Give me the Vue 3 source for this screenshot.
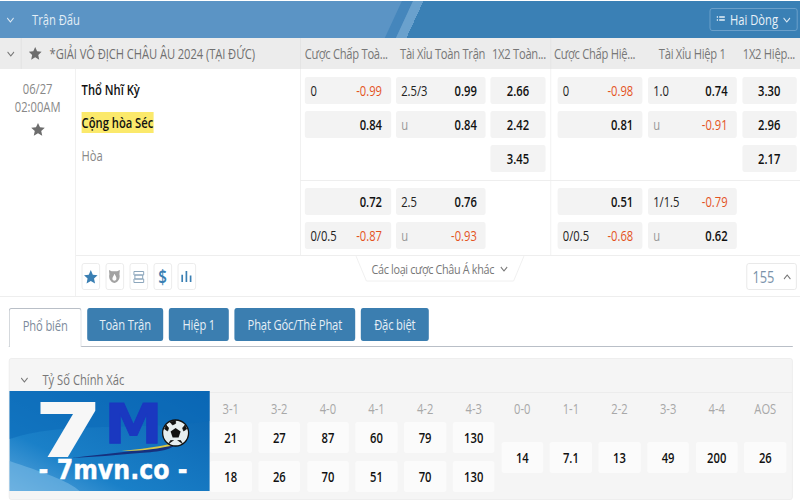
<template>
  <div class="page">
    <div class="topbar">
      <div class="topbar-left">
        <svg class="chev-white" viewBox="0 0 10 6" width="12" height="6"><path d="M1 1l4 4 4-4" /></svg>
        <span class="topbar-title">Trận Đấu</span>
      </div>
      <div class="view-btn">
        <svg viewBox="0 0 10 8" width="12" height="8" class="list-icon">
          <path d="M0 1h1.500M3 1h7M0 4h1.500M3 4h7" />
        </svg>
        <span>Hai Dòng</span>
        <svg class="chev-white" viewBox="0 0 10 6" width="11" height="6"><path d="M1 1l4 4 4-4" /></svg>
      </div>
    </div>

    <div class="league-row">
      <div class="league-toggle">
        <svg class="chev-gray" viewBox="0 0 10 6" width="11" height="6"><path d="M1 1l4 4 4-4" /></svg>
      </div>
      <div class="league-name">
        <svg viewBox="0 0 24 24" width="18" height="15" preserveAspectRatio="none" class="star-gray"><path :d="starPath" /></svg>
        <span>*GIẢI VÔ ĐỊCH CHÂU ÂU 2024 (TẠI ĐỨC)</span>
      </div>
      <div class="col-group first">
        <span class="h1">Cược Chấp Toà...</span>
        <span class="h2">Tài Xỉu Toàn Trận</span>
        <span class="h3">1X2 Toàn...</span>
      </div>
      <div class="col-group second">
        <span class="h1">Cược Chấp Hiệ...</span>
        <span class="h2">Tài Xỉu Hiệp 1</span>
        <span class="h3">1X2 Hiệp...</span>
      </div>
    </div>

    <div class="match">
      <div class="date-col">
        <div>06/27</div>
        <div>02:00AM</div>
        <svg viewBox="0 0 24 24" width="19" height="15" preserveAspectRatio="none" class="star-gray date-star"><path :d="starPath" /></svg>
      </div>
      <div class="match-body">
        <div class="match-main">
          <div class="teams">
            <div class="team"><b>Thổ Nhĩ Kỳ</b></div>
            <div class="team"><b class="marked">Cộng hòa Séc</b></div>
            <div class="team draw">Hòa</div>
          </div>
          <div class="odds">
            <div v-for="(section, i) in sections" :key="i" class="odds-section">
              <div v-for="(group, g) in section" :key="g" class="odds-group" :class="{ first: g === 0 }">
                <template v-for="(cell, c) in group" :key="c">
                  <div v-if="cell" class="cell" :class="{ solo: cell.length === 1 }">
                    <span v-if="cell.length > 1" class="line" :class="{ under: cell[0] === 'u' }">{{ cell[0] }}</span>
                    <span class="val" :class="{ neg: cell[cell.length - 1].startsWith('-') }">{{ cell[cell.length - 1] }}</span>
                  </div>
                  <div v-else class="cell-empty"></div>
                </template>
              </div>
            </div>
          </div>
        </div>
        <div class="match-foot">
          <div class="tools">
            <div class="tool">
              <svg viewBox="0 0 24 24" width="19" height="16" preserveAspectRatio="none" class="ico-fill"><path :d="starPath" /></svg>
            </div>
            <div class="tool">
              <svg viewBox="0 0 14 16" width="16" height="15" preserveAspectRatio="none">
                <path fill="#a3a3a3" d="M1 1l3 1.500h6L13 1l-.5 4.500c1 3.500-.5 8-5.500 9.500C2 13.500.5 9 1.500 5.500z" />
                <path fill="#fff" d="M7 5c1 2 2.500 3 2.200 5.500C9 12 8 12.600 7 12.600s-2-.6-2.200-2.100C4.600 8.500 6.500 7.500 7 5z" />
              </svg>
            </div>
            <div class="tool">
              <svg viewBox="0 0 14 14" width="17" height="14" preserveAspectRatio="none" class="ico-stroke">
                <path d="M2 1.500h10v3.500H2zM3 5h8v4H3zM2 9h10v3.500H2z" />
              </svg>
            </div>
            <div class="tool dollar">$</div>
            <div class="tool">
              <svg viewBox="0 0 12 14" width="14" height="13" preserveAspectRatio="none" class="ico-bars">
                <path d="M1.500 5v8M6 1v12M10.500 6v7" />
              </svg>
            </div>
          </div>
          <div class="more">
            <svg class="more-shape" viewBox="0 0 212 26" width="212" height="26"><path d="M1 0l13 25h184l13-25" /></svg>
            <span>Các loại cược Châu Á khác</span>
            <svg class="chev-gray" viewBox="0 0 10 6" width="12" height="6"><path d="M1 1l4 4 4-4" /></svg>
          </div>
          <div class="count">
            <span>155</span>
            <svg class="chev-gray" viewBox="0 0 10 6" width="12" height="6"><path d="M1 5l4-4 4 4" /></svg>
          </div>
        </div>
      </div>
    </div>

    <div class="tabs">
      <div
        v-for="(t, i) in tabs"
        :key="t.label"
        class="tab"
        :class="{ active: i === 0 }"
        :style="{ width: t.width + 'px' }"
      >{{ t.label }}</div>
    </div>

    <div class="panel">
      <div class="panel-head">
        <svg class="chev-gray" viewBox="0 0 10 6" width="11" height="6"><path d="M1 1l4 4 4-4" /></svg>
        <span>Tỷ Số Chính Xác</span>
      </div>
      <div class="scores">
        <div v-for="s in scores" :key="s.label" class="score-col">
          <div class="score-label">{{ s.label }}</div>
          <div class="score-vals">
            <div v-for="(v, i) in s.vals" :key="i" class="score-val">{{ v }}</div>
          </div>
        </div>
      </div>

      <svg class="logo" viewBox="0 0 200 100" width="250" height="100" preserveAspectRatio="none">
        <defs>
          <linearGradient id="logoBg" x1="0" y1="1" x2="1" y2="0">
            <stop offset="0" stop-color="#5ba6dc" />
            <stop offset="0.3" stop-color="#1a80c8" />
            <stop offset="1" stop-color="#0a63b0" />
          </linearGradient>
        </defs>
        <rect width="200" height="100" fill="url(#logoBg)" />
        <path d="M0 48C50 30 130 40 200 30V0H0z" fill="#0b6ab8" opacity=".55" />
        <path d="M0 100V70C30 80 60 90 70 100z" fill="#7cbbe6" opacity=".55" />
        <text x="26" y="65" class="logo-seven" textLength="66" lengthAdjust="spacingAndGlyphs">7</text>
        <text x="95" y="52" class="logo-m" textLength="58" lengthAdjust="spacingAndGlyphs">M</text>
        <path d="M62 67C100 62 135 60 165 52C166 58 150 61 130 62C105 64 85 66 62 67z" fill="#16307e" />
        <path d="M112 60C130 58 150 56 163 52L161 55C142 59 128 60 112 60z" fill="#d8c94a" />
        <circle cx="166" cy="42" r="13" fill="#e6eef0" stroke="#111" stroke-width="1.300" />
        <path d="M166 37l5 3.500-2 6h-6l-2-6z" fill="#111" />
        <path d="M166 29.500v3l-3 1.500-2.500-3zM177 38l-3 2-1-3 2.500-3zM155 38l3 2 1-3-2.500-3zM159 53l2-3.500h3M173 53l-2-3.500h-3" fill="#111" stroke="#111" stroke-width=".7" />
        <text x="29" y="88" class="logo-url" textLength="149" lengthAdjust="spacingAndGlyphs">- 7mvn.co -</text>
      </svg>
    </div>
  </div>
</template>

<script setup>
const starPath = 'M12 1.500l3.200 7 7.500.8-5.600 5.100 1.600 7.500L12 18l-6.700 3.900 1.600-7.500L1.300 9.300l7.500-.8z'

const tabs = [
  { label: 'Phổ biến', width: 91 },
  { label: 'Toàn Trận', width: 95 },
  { label: 'Hiệp 1', width: 75 },
  { label: 'Phạt Góc/Thẻ Phạt', width: 151 },
  { label: 'Đặc biệt', width: 85 },
]

// first value is the line, last one the price
const sections = [
  [
    [['0', '-0.99'], ['2.5/3', '0.99'], ['2.66'], ['0.84'], ['u', '0.84'], ['2.42'], null, null, ['3.45']],
    [['0', '-0.98'], ['1.0', '0.74'], ['3.30'], ['0.81'], ['u', '-0.91'], ['2.96'], null, null, ['2.17']],
  ],
  [
    [['0.72'], ['2.5', '0.76'], null, ['0/0.5', '-0.87'], ['u', '-0.93'], null],
    [['0.51'], ['1/1.5', '-0.79'], null, ['0/0.5', '-0.68'], ['u', '0.62'], null],
  ],
]

// the first four columns sit under the logo, so they are left out
const scores = [
  { label: '3-1', vals: [21, 18] },
  { label: '3-2', vals: [27, 26] },
  { label: '4-0', vals: [87, 70] },
  { label: '4-1', vals: [60, 51] },
  { label: '4-2', vals: [79, 70] },
  { label: '4-3', vals: [130, 130] },
  { label: '0-0', vals: [14] },
  { label: '1-1', vals: [7.1] },
  { label: '2-2', vals: [13] },
  { label: '3-3', vals: [49] },
  { label: '4-4', vals: [200] },
  { label: 'AOS', vals: [26] },
]
</script>

<style scoped>
/* the reference is a 1000px wide page squeezed into 800px, so it is built the same way */
.page {
  width: 1000px;
  height: 500px;
  overflow: hidden;
  transform: scaleX(0.8);
  transform-origin: 0 0;
  background: #fff;
  color: #777;
  font-family: "Open Sans", "Liberation Sans", sans-serif;
  font-size: 14px;
  position: relative;
}
svg { display: block; flex: none; }
.chev-white, .chev-gray { fill: none; stroke-width: 1.1; }
.chev-white { stroke: #dbe8f3; }
.chev-gray { stroke: #777; }

.topbar {
  position: relative;
  overflow: hidden;
  margin-top: 1px;
  height: 37px;
  display: flex;
  align-items: center;
  justify-content: space-between;
  padding: 0 3px 0 7px;
  background: #5b94c5;
}
.topbar::before, .topbar::after {
  content: "";
  position: absolute;
  top: 0;
  bottom: 0;
  transform: skewX(-30deg);
  transform-origin: 0 100%;
}
.topbar::before { left: 481px; width: 14px; background: #4586bc; }
.topbar::after {
  left: 495px;
  width: 700px;
  background: linear-gradient(90deg, #6aa1cd 13px, #3a80b5 13px);
}
.topbar-left, .view-btn { position: relative; z-index: 1; }
.topbar-left { display: flex; align-items: center; gap: 21px; }
.topbar-title { color: #e3eef6; }
.view-btn {
  height: 23px;
  width: 110px;
  box-sizing: border-box;
  border: 1px solid #6fa3cc;
  border-radius: 3px;
  display: flex;
  align-items: center;
  justify-content: center;
  gap: 5px;
  color: #e8f1f8;
}
.list-icon { fill: none; stroke: #e8f1f8; stroke-width: 1.4; }

.league-row {
  height: 31px;
  background: #ececec;
  display: flex;
  align-items: center;
}
.league-toggle {
  width: 27px;
  height: 100%;
  border-right: 1px solid #e0e0e0;
  box-sizing: border-box;
  display: flex;
  align-items: center;
  justify-content: center;
}
.league-name {
  width: 348px;
  display: flex;
  align-items: center;
  gap: 9px;
  padding-left: 8px;
  box-sizing: border-box;
  color: #707070;
  white-space: nowrap;
  letter-spacing: -0.1px;
}
.star-gray { fill: #6d6d6d; }
.col-group {
  width: 312.5px;
  height: 100%;
  display: flex;
  align-items: center;
  box-sizing: border-box;
  white-space: nowrap;
  border-left: 1px solid #e3e3e3;
  letter-spacing: -0.35px;
}
.col-group.first { padding-left: 5px; }
.col-group.first .h1 { width: 119px; }
.col-group.first .h2 { width: 115px; }
.col-group.second { padding-left: 4px; }
.col-group.second .h1 { width: 131px; }
.col-group.second .h2 { width: 105px; }

.match {
  display: flex;
  height: 227px;
  border-bottom: 1px solid #eee;
}
.date-col {
  width: 95px;
  flex: none;
  border-right: 1px solid #eee;
  text-align: center;
  padding-top: 11px;
  box-sizing: border-box;
  line-height: 18px;
  color: #888;
}
.date-star { margin: 6px auto 0; }
.match-body { flex: 1; display: flex; flex-direction: column; min-width: 0; }
.match-main { display: flex; height: 186px; }
.teams { width: 280px; flex: none; padding: 4px 0 0 7px; box-sizing: border-box; }
.team { height: 33px; display: flex; align-items: center; color: #888; }
.team b { color: #111; font-weight: 600; }
.team b.marked { background: #fbe96b; padding: 1px 0; }
.odds { flex: 1; min-width: 0; }
.odds-section { display: flex; }
.odds-section + .odds-section { border-top: 1px solid #eee; }
.odds-section:first-child { height: 111px; }
.odds-section:last-child { height: 75px; box-sizing: border-box; }
.odds-section:last-child .odds-group { padding-top: 7px; }
.odds-group {
  width: 312.5px;
  box-sizing: border-box;
  padding: 8px 0 0 8px;
  display: grid;
  grid-template-columns: 106px 111px 68px;
  column-gap: 7px;
  row-gap: 7px;
  grid-auto-rows: 27px;
  border-left: 1px solid #eee;
}
.odds-group.first {
  padding-left: 5px;
  grid-template-columns: 107.5px 112.5px 69px;
  column-gap: 6px;
}
.cell {
  background: #f3f3f3;
  border-radius: 3px;
  display: flex;
  align-items: center;
  justify-content: space-between;
  padding: 0 11px 0 7px;
  color: #222;
  white-space: nowrap;
}
.cell.solo { justify-content: flex-end; }
.odds-group > .cell:nth-child(3n) { justify-content: center; padding: 0; }
.line.under { color: #999; }
.val { color: #111; font-weight: 600; }
.val.neg { color: #e4531f; font-weight: 500; }

.match-foot {
  flex: 1;
  border-top: 1px solid #eee;
  display: flex;
  align-items: flex-start;
  position: relative;
}
.tools { display: flex; gap: 7.500px; padding: 7px 0 0 7px; }
.tool {
  width: 22.500px;
  height: 27px;
  border: 1px solid #eaeaea;
  border-radius: 3px;
  box-sizing: border-box;
  display: flex;
  align-items: center;
  justify-content: center;
}
.ico-fill { fill: #3a7fb3; }
.ico-stroke { fill: none; stroke: #8aa5bb; stroke-width: 1; }
.ico-bars { fill: none; stroke: #3a7fb3; stroke-width: 1.800; }
.dollar { color: #3a7fb3; font-size: 19px; font-weight: 600; }
.more {
  position: absolute;
  left: 349px;
  top: 0;
  width: 212px;
  height: 26px;
  display: flex;
  align-items: center;
  justify-content: center;
  gap: 6px;
  font-size: 13.500px;
  letter-spacing: -0.4px;
  white-space: nowrap;
}
.more-shape { position: absolute; left: 0; top: 0; fill: #fff; stroke: #eee; }
.more span, .more > .chev-gray { position: relative; }
.count {
  margin: 7px 4px 0 auto;
  width: 63.500px;
  height: 27px;
  border: 1px solid #e6e6e6;
  border-radius: 3px;
  display: flex;
  align-items: center;
  justify-content: space-between;
  padding: 0 5px 0 7px;
  box-sizing: border-box;
  color: #7b93aa;
  font-size: 16px;
}

.tabs {
  margin: 11px 9px 0 11px;
  height: 38px;
  display: flex;
  gap: 7px;
  align-items: flex-start;
  border-bottom: 1px solid #b9bfc7;
}
.tab {
  height: 33px;
  background: #3b7eb0;
  color: #e6eff6;
  border-radius: 3px;
  display: flex;
  align-items: center;
  justify-content: center;
  white-space: nowrap;
  letter-spacing: -0.2px;
}
.tab.active {
  height: 39px;
  background: #fff;
  color: #7c8a9b;
  border: 1px solid #b9bfc7;
  border-bottom: 0;
  border-radius: 3px 3px 0 0;
  box-sizing: border-box;
  padding-bottom: 6px;
}

.panel {
  position: relative;
  margin: 11px 9px 0 11px;
  height: 142px;
  box-sizing: border-box;
  background: #f5f5f5;
  border: 1px solid #ececec;
  border-radius: 3px;
}
.panel-head {
  height: 34px;
  display: flex;
  align-items: center;
  gap: 17px;
  padding: 8px 0 0 13px;
  box-sizing: border-box;
  border-bottom: 1px solid #ececec;
}
.scores { display: flex; padding-left: 246px; }
.score-col { width: 60.750px; display: flex; flex-direction: column; align-items: center; }
.score-label { height: 29px; line-height: 32px; color: #a8a8a8; }
.score-vals {
  height: 70px;
  display: flex;
  flex-direction: column;
  justify-content: center;
  gap: 8px;
}
.score-val {
  width: 52.500px;
  height: 31px;
  background: #fbfbfb;
  border-radius: 3px;
  display: flex;
  align-items: center;
  justify-content: center;
  color: #111;
  font-weight: 600;
}

.logo { position: absolute; left: 0; top: 32px; overflow: visible; }
.logo-seven { font-family: "DejaVu Sans", sans-serif; font-weight: 700; font-size: 73px; fill: #f7f7f7; stroke: #f7f7f7; stroke-width: 2px; }
.logo-m { font-family: "DejaVu Sans", sans-serif; font-weight: 700; font-size: 55px; fill: #1a38c0; stroke: #1a38c0; stroke-width: 1px; }
.logo-url { font-family: "DejaVu Sans", sans-serif; font-weight: 700; font-size: 26px; fill: #fff; stroke: #fff; stroke-width: .4px; }
</style>
